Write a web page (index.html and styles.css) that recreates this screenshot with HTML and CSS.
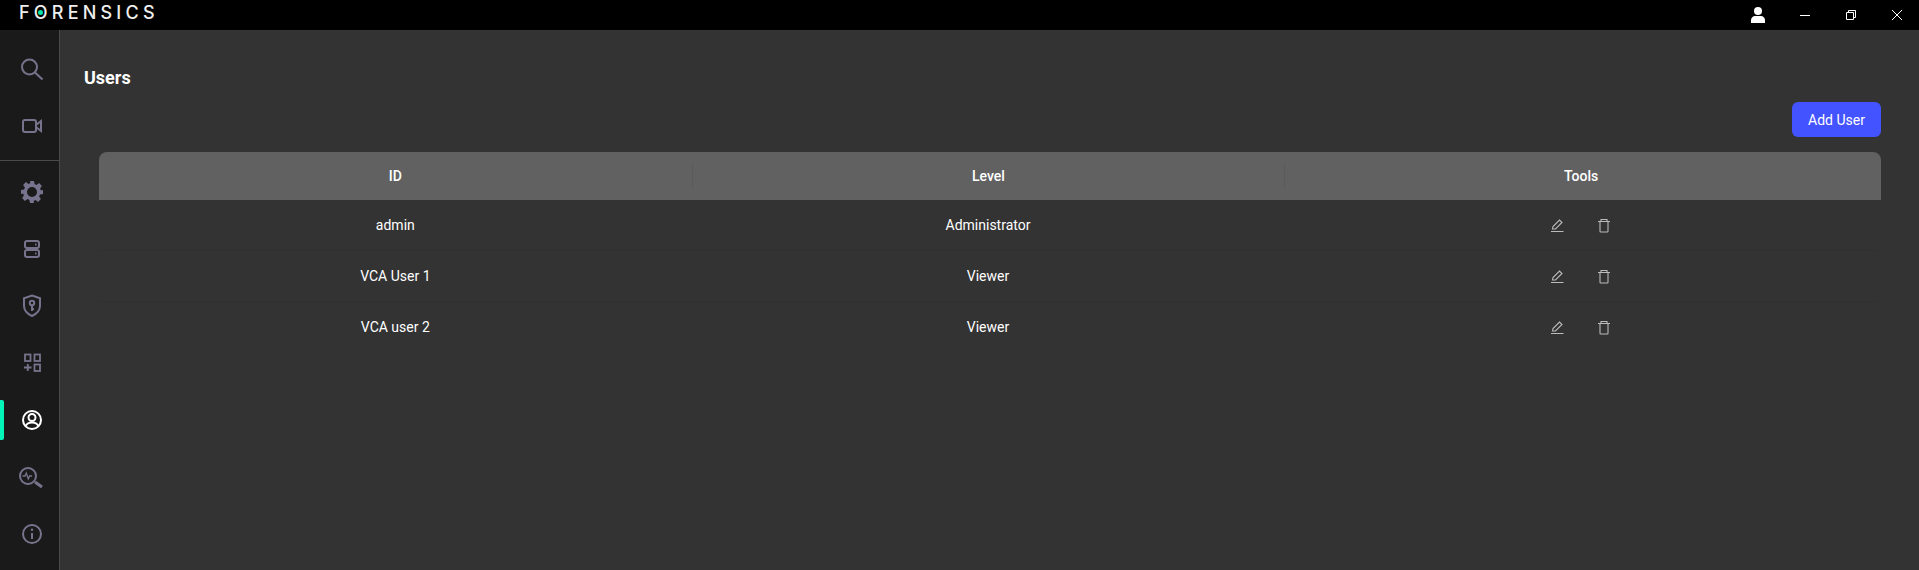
FILE: index.html
```html
<!DOCTYPE html>
<html lang="en">
<head>
<meta charset="utf-8">
<title>Users</title>
<link rel="stylesheet" href="styles.css">
</head>
<body>
<header class="titlebar">
  <div class="logo"><span>F</span><span class="logo-o">O<i class="logo-dot"></i></span><span>RENSICS</span></div>
  <div class="win-tools">
    <svg class="win-user" width="14" height="16" viewBox="0 0 14 16"><circle cx="7" cy="4" r="4" fill="#fff"/><path d="M0 16v-3c0-2 2-4 4-4h6c2 0 4 2 4 4v3z" fill="#fff"/></svg>
    <svg class="win-btn" width="10" height="10" viewBox="0 0 10 10"><path d="M0 5.500h10" stroke="#fff" fill="none"/></svg>
    <svg class="win-btn" width="10" height="10" viewBox="0 0 10 10"><path d="M.5 2.500h7v7h-7zM2.500 2.500v-2h7v7h-2" stroke="#fff" fill="none"/></svg>
    <svg class="win-btn" width="10" height="10" viewBox="0 0 10 10"><path d="M0 0l10 10M10 0L0 10" stroke="#fff" fill="none"/></svg>
  </div>
</header>
<div class="app">
  <nav class="sidebar">
    <div class="nav-group nav-top">
      <a class="nav-item"><svg width="26" height="26" viewBox="0 0 26 26"><circle cx="10.500" cy="11" r="7.500" class="ico"/><path d="M16 16.500l7.500 7" class="ico"/></svg></a>
      <a class="nav-item"><svg width="24" height="24" viewBox="0 0 24 24"><rect x="3" y="6" width="13" height="12" rx="2" class="ico"/><path d="M16 11l5-4v10l-5-4" class="ico"/></svg></a>
    </div>
    <div class="nav-group nav-main">
      <a class="nav-item"><svg width="24" height="24" viewBox="0 0 24 24"><path fill-rule="evenodd" fill="#77738c" d="M10 1h4l.6 3.100 1.800.8 2.700-1.800 2.800 2.800-1.800 2.700.8 1.800L23 10v4l-3.100.6-.8 1.800 1.800 2.700-2.800 2.800-2.700-1.800-1.800.8L14 23h-4l-.6-3.100-1.800-.8-2.700 1.800-2.800-2.800 1.800-2.700-.8-1.800L1 14v-4l3.100-.6.800-1.800-1.800-2.700 2.800-2.800 2.700 1.800 1.800-.8zM12 7a5 5 0 1 0 0 10 5 5 0 0 0 0-10z"/></svg></a>
      <a class="nav-item"><svg width="24" height="24" viewBox="0 0 24 24"><rect x="5" y="4" width="14" height="7" rx="2" class="ico"/><rect x="5" y="13" width="14" height="7" rx="2" class="ico"/><path d="M15 7.500h1.500M15 16.500h1.500" class="ico"/></svg></a>
      <a class="nav-item"><svg width="24" height="24" viewBox="0 0 24 24"><path d="M12 1.500l8 2.800v7.500c0 5-3.500 8.200-8 10.200-4.500-2-8-5.200-8-10.200V4.300z" class="ico"/><circle cx="12" cy="9" r="2.200" class="ico"/><path d="M12 11.200V17M12 15h2" class="ico"/></svg></a>
      <a class="nav-item"><svg width="24" height="24" viewBox="0 0 24 24"><rect x="5" y="3.500" width="5.500" height="6.500" class="ico-apps"/><rect x="14.500" y="3.500" width="5.500" height="6.500" class="ico-apps"/><rect x="14.500" y="13.500" width="5.500" height="6.500" class="ico-apps"/><path d="M7.800 13v7M4 16.500h7.500" class="ico-apps"/></svg></a>
      <a class="nav-item is-active"><svg width="24" height="24" viewBox="0 0 24 24"><circle cx="12" cy="12" r="9" class="ico-on"/><circle cx="12" cy="9.500" r="3.500" class="ico-on"/><path d="M5.500 18.500c1-3 3.500-4 6.500-4s5.500 1 6.500 4" class="ico-on"/></svg></a>
      <a class="nav-item"><svg width="26" height="26" viewBox="0 0 26 26"><circle cx="9" cy="12" r="8" class="ico"/><path d="M3.500 12h2.500l1.300-3 2 6 1.300-3h2.500" class="ico-thin"/><path d="M16 18l7 5" class="ico-heavy"/></svg></a>
      <a class="nav-item"><svg width="24" height="24" viewBox="0 0 24 24"><circle cx="12" cy="12" r="9" class="ico"/><path d="M12 11v6" class="ico"/><circle cx="12" cy="7.800" r="1.200" fill="#77738c"/></svg></a>
    </div>
  </nav>
  <main class="content">
    <h1 class="page-title">Users</h1>
    <div class="actions"><button class="add-btn">Add User</button></div>
    <div class="table">
      <div class="row head">
        <div class="cell">ID</div><div class="cell sep">Level</div><div class="cell sep">Tools</div>
      </div>
      <div class="row">
        <div class="cell">admin</div><div class="cell">Administrator</div>
        <div class="cell tools">
          <svg width="16" height="16" viewBox="0 0 16 16"><path d="M3.500 11l.5-2.500L10.500 2 13 4.500 6.500 11zM2 13.500h12.500" class="tool"/></svg>
          <svg width="16" height="16" viewBox="0 0 16 16"><path d="M2 3.500h12M5 3.500V1.500h6v2M4 3.500v9.700c0 .5.400.8.800.8h6.400c.4 0 .8-.3.800-.8V3.500" class="tool"/></svg>
        </div>
      </div>
      <div class="row">
        <div class="cell">VCA User 1</div><div class="cell">Viewer</div>
        <div class="cell tools">
          <svg width="16" height="16" viewBox="0 0 16 16"><path d="M3.500 11l.5-2.500L10.500 2 13 4.500 6.500 11zM2 13.500h12.500" class="tool"/></svg>
          <svg width="16" height="16" viewBox="0 0 16 16"><path d="M2 3.500h12M5 3.500V1.500h6v2M4 3.500v9.700c0 .5.400.8.800.8h6.400c.4 0 .8-.3.800-.8V3.500" class="tool"/></svg>
        </div>
      </div>
      <div class="row">
        <div class="cell">VCA user 2</div><div class="cell">Viewer</div>
        <div class="cell tools">
          <svg width="16" height="16" viewBox="0 0 16 16"><path d="M3.500 11l.5-2.500L10.500 2 13 4.500 6.500 11zM2 13.500h12.500" class="tool"/></svg>
          <svg width="16" height="16" viewBox="0 0 16 16"><path d="M2 3.500h12M5 3.500V1.500h6v2M4 3.500v9.700c0 .5.400.8.800.8h6.400c.4 0 .8-.3.800-.8V3.500" class="tool"/></svg>
        </div>
      </div>
    </div>
  </main>
</div>
</body>
</html>
```
FILE: styles.css
```css
* { box-sizing: border-box; }
html, body { margin: 0; height: 100%; overflow: hidden; }
body { background: #333; color: #fff; font-family: Roboto, "Liberation Sans", sans-serif; font-size: 14px; display: flex; flex-direction: column; }
.titlebar { height: 30px; background: #000; display: flex; align-items: center; justify-content: space-between; flex: none; }
.logo { display: flex; margin: 0 0 5px 19px; font-family: Inter, "Liberation Sans", sans-serif; font-size: 18px; font-weight: 500; letter-spacing: 4.2px; color: #eee; line-height: 1; }
.logo-o { position: relative; }
.logo-dot { position: absolute; left: 4.500px; top: 6.500px; width: 5px; height: 5px; border-radius: 50%; background: #00e5a8; }
.win-tools { display: flex; align-items: center; }
.win-user { margin-right: 35px; }
.win-btn { margin-right: 36px; }
.win-btn:last-child { margin-right: 17px; }
.app { flex: 1; display: flex; min-height: 0; }
.sidebar { width: 60px; background: #1a1a1a; border-right: 1px solid #4a4a4a; flex: none; }
.nav-group { display: flex; flex-direction: column; }
.nav-top { height: 131px; padding-top: 10px; border-bottom: 1px solid #4a4a4a; }
.nav-main { padding-top: 2px; }
.nav-item { height: 57px; padding-left: 5px; display: flex; align-items: center; justify-content: center; position: relative; }
.is-active::before { content: ""; position: absolute; left: 0; top: 9px; width: 4px; height: 40px; border-radius: 0 2px 2px 0; background: #00f5b8; }
.ico { fill: none; stroke: #77738c; stroke-width: 2; }
.ico-apps { fill: none; stroke: #77738c; stroke-width: 1.800; }
.ico-thin { fill: none; stroke: #77738c; stroke-width: 1.300; }
.ico-heavy { fill: none; stroke: #77738c; stroke-width: 3; }
.ico-on { fill: none; stroke: #fff; stroke-width: 2; }
.content { flex: 1; padding: 37px 38px 0 24px; min-width: 0; }
.page-title { margin: 0; font-size: 18px; font-weight: 700; line-height: 21px; }
.actions { display: flex; justify-content: flex-end; margin-top: 14px; }
.add-btn { width: 89px; height: 35px; border: 0; border-radius: 6px; background: #4353ff; color: #fff; font: 400 14px Roboto, sans-serif; }
.table { margin: 15px 0 0 15px; }
.row { display: grid; grid-template-columns: repeat(3, 1fr); height: 51px; margin-right: 3px; padding-right: 1px; align-items: center; text-align: center; border-bottom: 1px solid #303030; }
.row:last-child { border-bottom-color: transparent; }
.head { height: 48px; margin-right: 0; padding-right: 4px; background: #616161; border: 0; border-radius: 8px 8px 0 0; font-weight: 500; }
.cell { display: flex; align-items: center; justify-content: center; height: 24px; }
.sep { border-left: 1px solid #5a5a5a; }
.tools { gap: 31px; margin-top: 1px; }
.tool { fill: none; stroke: #bbb; stroke-width: 1.100; }
```
